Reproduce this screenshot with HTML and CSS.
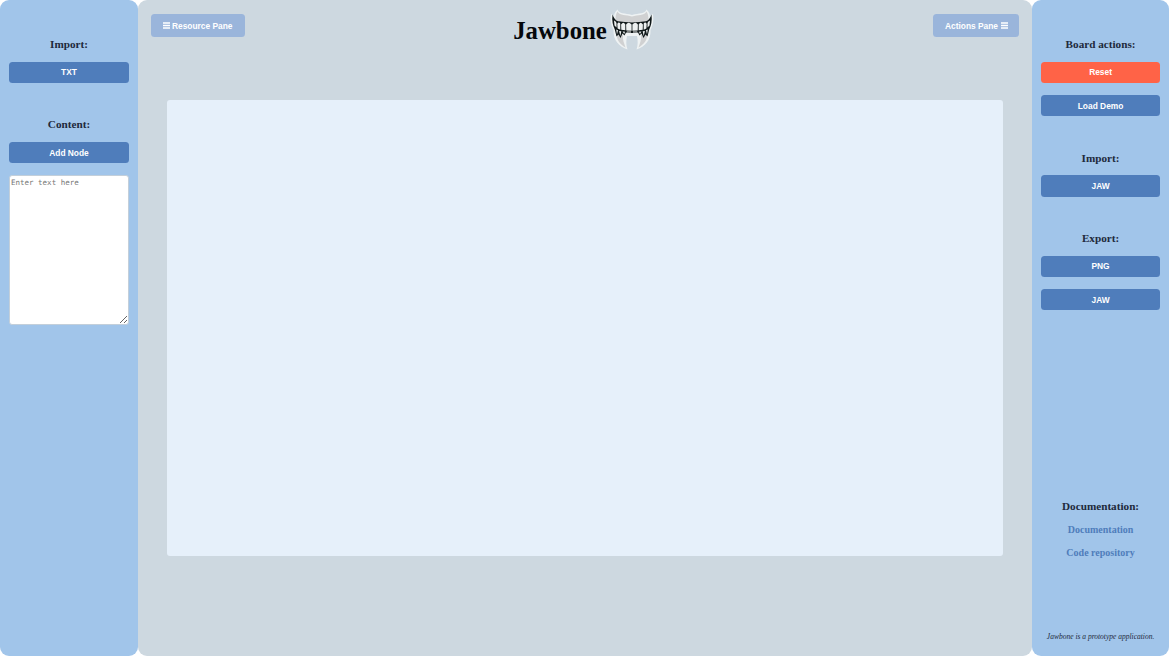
FILE: index.html
```html
<!DOCTYPE html>
<html lang="en">
<head>
<meta charset="utf-8">
<title>Jawbone</title>
<link rel="stylesheet" href="styles.css">
</head>
<body>
<div class="app">
  <aside class="pane">
    <section class="group">
      <h2>Import:</h2>
      <button class="btn">TXT</button>
    </section>
    <section class="group">
      <h2>Content:</h2>
      <button class="btn">Add Node</button>
      <textarea class="node-text" placeholder="Enter text here"></textarea>
    </section>
  </aside>
  <main class="main">
    <header class="top">
      <button class="toggle"><svg class="bars" viewBox="0 0 7 7"><path d="M0 1h7M0 3.5h7M0 6h7"/></svg><span>Resource Pane</span></button>
      <div class="brand">
        <h1>Jawbone</h1>
        <svg class="logo" viewBox="0 0 44 42">
          <path class="halo" d="M7.500 .5C9 5 15 4 22 6C29 4 35 5 36.500 .5C39 3 40 5 40 7L43 5C44 12 42.500 17 40.500 21C41 31 35 38 26.500 40.500C28 36 28 32 27 27H17C16 32 16 36 17.500 40.500C9 38 3 31 3.500 21C1.500 17 0 12 1 5L4 7C4 5 5 3 7.500 .5Z"/>
          <path class="hollow" d="M18.500 27H25.500L26 39H18Z"/>
          <path class="bone" d="M7.500 2.500C10 7 16 5.500 22 7.500C28 5.500 34 7 36.500 2.500C39 6 39 12 37 17Q22 20 7 17C5 12 5 6 7.500 2.500Z"/>
          <path class="bone" d="M7 24C6 31 10 35 15.500 38.500C14 34 12.500 31 13 26Z M37 24C38 31 34 35 28.500 38.500C30 34 31.500 31 31 26Z"/>
          <path class="gum" d="M2.500 5.500Q4.500 11 8 12.300Q22 14.500 36 12.300Q39.500 11 41.500 5.500Q42.500 14 39.200 20.500L37.500 27.500L35.500 25.500L33.500 29L31.500 24.500L29.500 26.500L28 23.500Q22 24.500 16 23.500L14.500 26.500L12.500 24.500L10.500 29L8.500 25.500L6.500 27.500L4.800 20.500Q1.500 14 2.500 5.500Z"/>
          <path class="tooth" d="M4 11.500Q6 12 6.500 14V18.500L4.500 16.500ZM7.300 15Q8.500 12.500 10.300 14.500V20.800L7.600 19.500ZM11.100 15.500Q13.500 12 15.300 15.500V21.300L11.300 20.800ZM16.100 15.500Q18.500 12 21.600 15.500V21.700L16.300 21.400ZM22.400 15.500Q25.500 12 27.900 15.500L27.700 21.400L22.400 21.700ZM28.700 15.500Q30.500 12 32.900 15.500L32.700 20.800L28.700 21.300ZM33.700 14.500Q35.500 12.500 36.700 15L36.400 19.500L33.700 20.800ZM37.500 14Q38 12 40 11.500L39.500 16.500L37.500 18.500Z"/>
          <path class="tooth" d="M6.200 20.500l1.800.8-1 4zM9.100 22l2.200.3-.9 4.700zM12.600 22.500l2.500.2-.9 2.300zM16.700 22.600h4.300v.8h-3.800zM23 22.600h4.300l-.5.8h-3.800zM28.900 22.700l2.500-.2-1.400 2.500zM32.700 22.300l2.200-.3-1.200 5zM36 21.300l1.800-.8-.8 4.800z"/>
        </svg>
      </div>
      <button class="toggle"><span>Actions Pane</span><svg class="bars" viewBox="0 0 7 7"><path d="M0 1h7M0 3.500h7M0 6h7"/></svg></button>
    </header>
    <div class="board"></div>
  </main>
  <aside class="pane">
    <section class="group">
      <h2>Board actions:</h2>
      <button class="btn danger">Reset</button>
      <button class="btn">Load Demo</button>
    </section>
    <section class="group">
      <h2>Import:</h2>
      <button class="btn">JAW</button>
    </section>
    <section class="group">
      <h2>Export:</h2>
      <button class="btn">PNG</button>
      <button class="btn">JAW</button>
    </section>
    <section class="docs">
      <h2>Documentation:</h2>
      <a class="link">Documentation</a>
      <a class="link">Code repository</a>
    </section>
    <p class="note">Jawbone is a prototype application.</p>
  </aside>
</div>
</body>
</html>
```
FILE: styles.css
```css
* { box-sizing: border-box; }
body { margin: 0; background: #fff; font-family: "Liberation Serif", "Times New Roman", serif; }
.app { display: grid; grid-template-columns: 138px 1fr 137.5px; height: 656px; overflow: hidden; }
.pane { display: flex; flex-direction: column; background: #a1c5ea; border-radius: 9px; padding: 37px 9px 0; }
.pane:last-child { padding-left: 9.3px; padding-right: 8.7px; }
.group { display: flex; flex-direction: column; margin-bottom: 34.3px; }
h2 { margin: 0 0 10.6px; font-size: 11.2px; line-height: 14px; font-weight: bold; text-align: center; color: #1e2a3c; }
.btn { height: 21.4px; margin: 0 0 12px; padding: 0; border: 0; border-radius: 3.5px; background: #4f7dbb; color: #fff; font: bold 8.4px "Liberation Sans", Arial, sans-serif; }
.btn:last-child { margin-bottom: 0; }
.danger { background: #ff6347; }
.node-text { height: 149.5px; margin: 0; padding: 1px; border: 1px solid #c3cfda; border-radius: 3px; font: 7.5px/11px "DejaVu Sans Mono", monospace; resize: vertical; }
.node-text::placeholder { color: #757575; }
.main { display: flex; flex-direction: column; background: #cdd8e0; border-radius: 9px; padding: 0 12.5px; }
.top { display: grid; grid-template-columns: 1fr auto 1fr; height: 99.6px; align-items: start; }
.toggle { display: flex; align-items: center; gap: 2.5px; height: 23px; margin-top: 14px; padding: 0 12px; border: 0; border-radius: 3.5px; background: #9ab5db; color: #fff; font: bold 8.4px "Liberation Sans", Arial, sans-serif; }
.toggle:first-child { justify-self: start; }
.toggle:last-child { justify-self: end; padding: 0 11.5px; }
.bars { width: 7px; height: 7px; fill: none; stroke: #fff; stroke-width: 1.3; }
.brand { display: flex; gap: 3.5px; padding-top: 9px; margin-right: 2px; }
h1 { margin: 0; padding-top: 7px; font-size: 24.8px; line-height: 29px; color: #05080c; }
.logo { width: 44px; height: 42px; }
.halo { fill: #eef2f3; }
.hollow { fill: #cdd8e0; }
.bone { fill: #d0d1d2; }
.gum { fill: #101819; }
.tooth { fill: #edf0f0; }
.board { height: 456.6px; margin: 0 16px; background: #e6f0fa; border-radius: 3px; }
.docs { display: flex; flex-direction: column; align-items: center; margin-top: 154.5px; }
.docs h2 { margin-bottom: 9.5px; }
.link { margin-bottom: 9px; font-size: 10px; line-height: 14px; font-weight: bold; color: #4f7dbb; }
.note { margin: 62.3px 0 0; font-size: 7.5px; line-height: 12px; font-style: italic; text-align: center; white-space: nowrap; color: #1e2a3c; }
```
